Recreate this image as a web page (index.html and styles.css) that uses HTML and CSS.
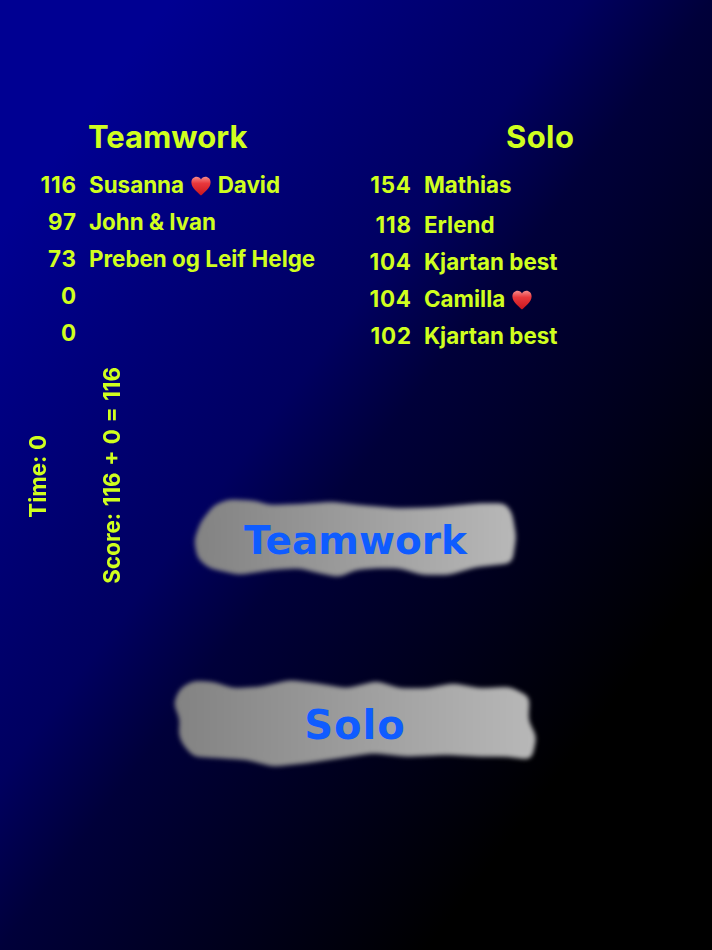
FILE: index.html
```html
<!DOCTYPE html>
<html lang="en">
<head>
<meta charset="utf-8">
<title>Teamwork and Solo</title>
<link rel="stylesheet" href="styles.css">
</head>
<body>
<svg class="defs" width="0" height="0" aria-hidden="true">
  <defs>
    <linearGradient id="heart-fill" x1="0" y1="0" x2="0" y2="1">
      <stop offset="0" stop-color="#f58a8a"/>
      <stop offset="0.35" stop-color="#e8383c"/>
      <stop offset="1" stop-color="#c8161e"/>
    </linearGradient>
    <symbol id="heart" viewBox="0 0 20 20">
      <path d="M10 19.500C7 16.500.4 12 .4 6.400.4 3 2.800 .8 5.600 .8 7.500 .8 9.100 1.800 10 3.600 10.900 1.800 12.500 .8 14.400 .8 17.200 .8 19.600 3 19.600 6.400 19.600 12 13 16.500 10 19.500Z" fill="url(#heart-fill)"/>
    </symbol>
    <linearGradient id="blob-fill" x1="0" y1="0" x2="1" y2="0">
      <stop offset="0" stop-color="#828282"/>
      <stop offset="1" stop-color="#b8b8b8"/>
    </linearGradient>
    <filter id="blob-blur" x="-5%" y="-20%" width="110%" height="140%" color-interpolation-filters="sRGB">
      <feGaussianBlur stdDeviation="4"/>
      <feComponentTransfer>
        <feFuncA type="linear" slope="5" intercept="-2"/>
      </feComponentTransfer>
      <feGaussianBlur stdDeviation="1.900"/>
    </filter>
  </defs>
</svg>
<main class="screen">
  <section class="scores">
    <div class="board board-team">
      <h2 class="board-title title-team">Teamwork</h2>
      <ol class="rows">
        <li class="row"><span class="num">116</span><span class="name">Susanna <svg class="heart"><use href="#heart"/></svg> David</span></li>
        <li class="row"><span class="num">97</span><span class="name">John &amp; Ivan</span></li>
        <li class="row"><span class="num">73</span><span class="name">Preben og Leif Helge</span></li>
        <li class="row"><span class="num">0</span><span class="name"></span></li>
        <li class="row"><span class="num">0</span><span class="name"></span></li>
      </ol>
    </div>
    <div class="board board-solo">
      <h2 class="board-title title-solo">Solo</h2>
      <ol class="rows">
        <li class="row row-tall"><span class="num">154</span><span class="name">Mathias</span></li>
        <li class="row"><span class="num">118</span><span class="name">Erlend</span></li>
        <li class="row"><span class="num">104</span><span class="name">Kjartan best</span></li>
        <li class="row"><span class="num">104</span><span class="name">Camilla <svg class="heart"><use href="#heart"/></svg></span></li>
        <li class="row"><span class="num">102</span><span class="name">Kjartan best</span></li>
      </ol>
    </div>
  </section>
  <section class="lower">
    <div class="side side-time">Time: 0</div>
    <div class="side side-score">Score: 116 + 0 = 116</div>
    <div class="buttons">
      <button class="blob blob-team" type="button">
        <svg class="blob-shape" viewBox="0 0 345 100" aria-hidden="true">
          <polygon points="10,50 16.700,31.700 30,15 45,9.300 71.700,10.700 85,15 115,14 148.300,11.700 175,15 215,18.300 251.700,17.300 295,13.300 321.700,13.300 328.300,23.300 332.300,46.700 328.300,73.300 291.700,77.300 265,85 238.300,85 215,78.300 191.700,78.300 171.700,80 155,87.300 135,83.300 115,78.300 88.300,80 55,85 25,78.300 13.300,68.300" fill="url(#blob-fill)" filter="url(#blob-blur)"/>
        </svg>
        <span class="blob-text">Teamwork</span>
      </button>
      <button class="blob blob-solo" type="button">
        <svg class="blob-shape" viewBox="0 0 380 110" aria-hidden="true">
          <polygon points="8.300,33.300 15,18.300 28.300,10.700 48.300,11.700 68.300,18.300 95,16.700 125,10 151.700,13.300 181.700,18.300 211.700,11 235,18.300 261.700,18.300 288.300,13.300 315,18.300 345,16.700 365,26.700 363.300,50 371.700,66.700 366.700,90 341.700,86.700 315,86.700 281.700,85 241.700,86.700 208.300,83.300 175,88.300 141.700,93.300 108.300,96.700 81.700,90 55,88.300 28.300,86.700 16.700,73.300 13.300,63.300 15,50" fill="url(#blob-fill)" filter="url(#blob-blur)"/>
        </svg>
        <span class="blob-text">Solo</span>
      </button>
    </div>
  </section>
</main>
</body>
</html>
```
FILE: styles.css
```css
html, body {
  margin: 0;
  padding: 0;
  background: #000;
}

.defs {
  position: absolute;
}

.screen {
  box-sizing: border-box;
  width: 712px;
  height: 950px;
  overflow: hidden;
  padding-top: 116px;
  background: linear-gradient(to bottom right, #000092 12%, #000060 41%, #00003a 50%, #000000 80%);
  font-family: "Inter", "Liberation Sans", sans-serif;
  font-weight: 700;
  color: #d0ff1e;
}

.scores {
  display: flex;
  height: 235px;
}

.board-team {
  width: 351px;
}

.board-title {
  margin: 0;
  font-size: 31px;
  line-height: 41px;
  font-weight: 700;
}

.title-team {
  padding-left: 88px;
}

.title-solo {
  padding-left: 155px;
  letter-spacing: 0.400px;
}

.rows {
  list-style: none;
  margin: 9px 0 0;
  padding: 0;
}

.board-solo .rows {
  margin-top: 5.500px;
}

.row {
  display: flex;
  gap: 13px;
  height: 37px;
  align-items: center;
  font-size: 22.400px;
  white-space: nowrap;
}

.row-tall {
  height: 43px;
}

.num {
  width: 76.800px;
  text-align: right;
  letter-spacing: 0.800px;
  margin-right: -0.800px;
}

.board-solo .num {
  width: 60.800px;
}

.heart {
  width: 20px;
  height: 20px;
  margin: 0 1.500px;
  vertical-align: -3px;
}

.lower {
  position: relative;
  height: 599px;
}

.side {
  position: absolute;
  writing-mode: vertical-rl;
  transform: rotate(180deg);
  font-size: 22.400px;
  line-height: 24px;
  white-space: nowrap;
}

.side-time {
  left: 26px;
  top: 84px;
}

.side-score {
  left: 100px;
  top: 16px;
  word-spacing: 1.200px;
}

.buttons {
  display: flex;
  flex-direction: column;
}

.blob {
  position: relative;
  display: block;
  padding: 0 2px 0 0;
  border: 0;
  background: none;
  font-family: "DejaVu Sans", Verdana, sans-serif;
  font-weight: 700;
  font-size: 39px;
  color: #0f5cff;
}

.blob-team {
  width: 345px;
  height: 100px;
  margin: 139px 0 0 184px;
}

.blob-solo {
  width: 380px;
  height: 110px;
  margin: 80px 0 0 165px;
  padding: 0;
  font-size: 40px;
  letter-spacing: 1px;
}

.blob-shape {
  position: absolute;
  inset: 0;
  width: 100%;
  height: 100%;
}

.blob-text {
  position: relative;
}
```
